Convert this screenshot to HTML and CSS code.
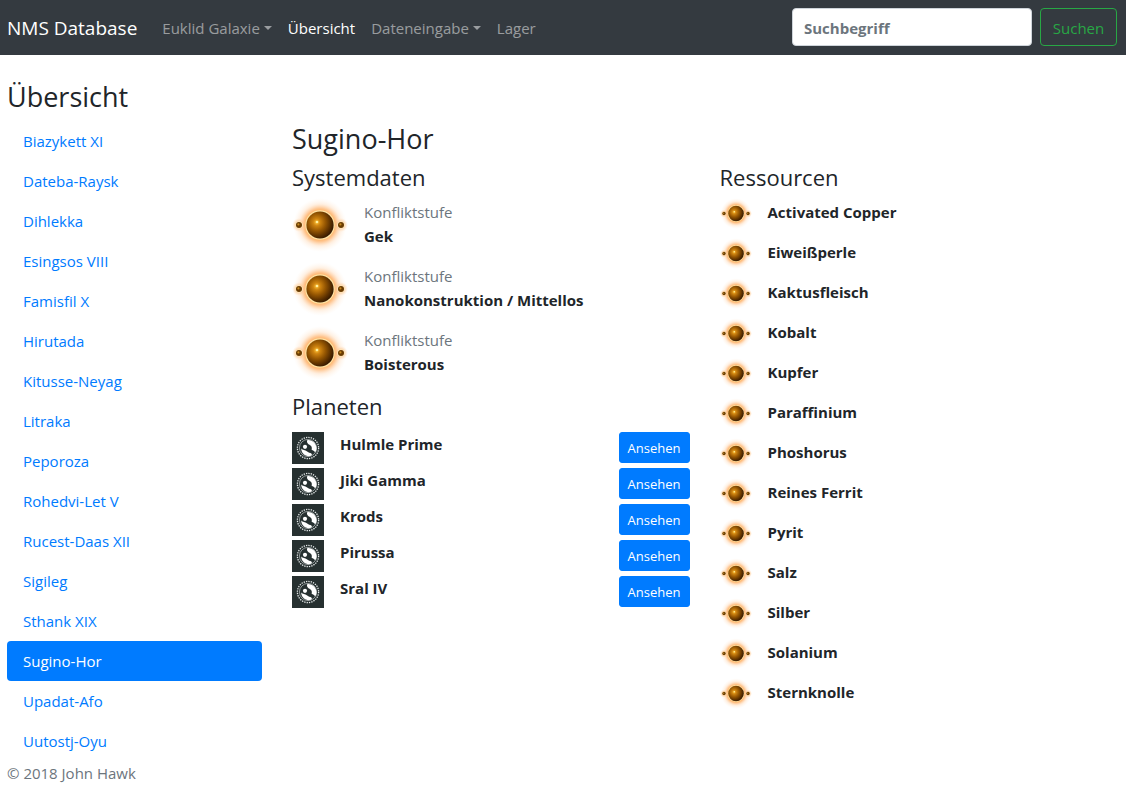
FILE: index.html
```html
<!DOCTYPE html>
<html lang="de">
<head>
<meta charset="utf-8">
<meta name="viewport" content="width=device-width, initial-scale=1">
<title>NMS Database</title>
<link rel="stylesheet" href="styles.css">
</head>
<body>
<svg class="sprite" aria-hidden="true">
  <defs>
    <radialGradient id="glow">
      <stop offset="0.5" stop-color="#ffa64c" stop-opacity="0.95"/>
      <stop offset="0.62" stop-color="#ffb066" stop-opacity="0.7"/>
      <stop offset="0.78" stop-color="#ffcc9c" stop-opacity="0.3"/>
      <stop offset="1" stop-color="#ffe8d0" stop-opacity="0"/>
    </radialGradient>
    <radialGradient id="moonglow">
      <stop offset="0.3" stop-color="#ffb060" stop-opacity="0.8"/>
      <stop offset="1" stop-color="#ffd8b0" stop-opacity="0"/>
    </radialGradient>
    <radialGradient id="ball" cx="0.38" cy="0.4" r="0.64">
      <stop offset="0" stop-color="#ffc63c"/>
      <stop offset="0.2" stop-color="#cf8410"/>
      <stop offset="0.5" stop-color="#955602"/>
      <stop offset="0.8" stop-color="#5a2f00"/>
      <stop offset="1" stop-color="#351900"/>
    </radialGradient>
    <symbol id="orb" viewBox="0 0 56 56">
      <circle cx="28" cy="29" r="27" fill="url(#glow)"/>
      <circle cx="7" cy="29" r="7" fill="url(#moonglow)"/>
      <circle cx="49" cy="29" r="7" fill="url(#moonglow)"/>
      <circle cx="28" cy="29" r="14.8" fill="#ffe3a4"/>
      <circle cx="7" cy="29" r="3.8" fill="#ffe9c0"/>
      <circle cx="49" cy="29" r="3.8" fill="#ffe9c0"/>
      <circle cx="28" cy="29" r="13.6" fill="url(#ball)"/>
      <circle cx="25" cy="26" r="1.3" fill="#fff0a0"/>
      <circle cx="7" cy="29" r="3" fill="#6b3c02"/>
      <circle cx="49" cy="29" r="3" fill="#6b3c02"/>
      <circle cx="6.400" cy="28.400" r="1.1" fill="#c88a20"/>
      <circle cx="48.400" cy="28.400" r="1.1" fill="#c88a20"/>
    </symbol>
    <symbol id="planet" viewBox="0 0 32 32">
      <rect width="32" height="32" fill="#263030"/>
      <circle cx="16" cy="16" r="10.6" fill="none" stroke="#e8ecec" stroke-width="1.3" stroke-dasharray="1.3 1.08"/>
      <circle cx="16" cy="16" r="8.6" fill="none" stroke="#a9b0b0" stroke-width="0.8"/>
      <path fill="#fff" d="M15.500 8C20.500 7.600 24.600 11.500 24.500 16.500C24.400 18.200 24 19.300 23.200 20.300C22.300 19.300 21 18.300 19.600 17.800C19.900 16.800 20 15.500 19.300 14.300C18.500 12.900 16.600 12.700 15.600 11.200C14.900 10.200 14.700 9 15.500 8Z"/>
      <circle cx="13" cy="14.800" r="2.100" fill="#fff"/>
      <path fill="#fff" d="M9.200 16.500C10.600 18.300 13.400 17.800 14.800 19.200C16.200 20.700 18.300 20.500 19.600 21.800C20 22.300 20 23 19.500 23.600C15 25.500 9.300 22.300 9.200 16.500Z"/>
    </symbol>
  </defs>
</svg>

<nav class="navbar">
  <a class="brand" href="#">NMS Database</a>
  <ul class="nav-list">
    <li><a class="nav-link dropdown" href="#">Euklid Galaxie</a></li>
    <li><a class="nav-link active" href="#" aria-current="page">Übersicht</a></li>
    <li><a class="nav-link dropdown" href="#">Dateneingabe</a></li>
    <li><a class="nav-link" href="#">Lager</a></li>
  </ul>
  <form class="search">
    <input class="search-input" type="search" placeholder="Suchbegriff" aria-label="Suchbegriff">
    <button class="btn-search" type="submit">Suchen</button>
  </form>
</nav>

<main class="container">
  <h1 class="title">Übersicht</h1>
  <div class="layout">
    <nav class="pills" aria-label="Systeme">
      <a class="pill" href="#">Biazykett XI</a>
      <a class="pill" href="#">Dateba-Raysk</a>
      <a class="pill" href="#">Dihlekka</a>
      <a class="pill" href="#">Esingsos VIII</a>
      <a class="pill" href="#">Famisfil X</a>
      <a class="pill" href="#">Hirutada</a>
      <a class="pill" href="#">Kitusse-Neyag</a>
      <a class="pill" href="#">Litraka</a>
      <a class="pill" href="#">Peporoza</a>
      <a class="pill" href="#">Rohedvi-Let V</a>
      <a class="pill" href="#">Rucest-Daas XII</a>
      <a class="pill" href="#">Sigileg</a>
      <a class="pill" href="#">Sthank XIX</a>
      <a class="pill selected" href="#" aria-current="true">Sugino-Hor</a>
      <a class="pill" href="#">Upadat-Afo</a>
      <a class="pill" href="#">Uutostj-Oyu</a>
    </nav>
    <section>
      <h2 class="title">Sugino-Hor</h2>
      <div class="columns">
        <div>
          <h3 class="subtitle">Systemdaten</h3>
          <ul class="facts">
            <li class="fact"><svg class="orb-large"><use href="#orb"/></svg><div><div class="muted">Konfliktstufe</div><strong>Gek</strong></div></li>
            <li class="fact"><svg class="orb-large"><use href="#orb"/></svg><div><div class="muted">Konfliktstufe</div><strong>Nanokonstruktion / Mittellos</strong></div></li>
            <li class="fact"><svg class="orb-large"><use href="#orb"/></svg><div><div class="muted">Konfliktstufe</div><strong>Boisterous</strong></div></li>
          </ul>
          <h3 class="subtitle">Planeten</h3>
          <ul class="planets">
            <li class="planet"><svg class="planet-icon"><use href="#planet"/></svg><strong class="planet-name">Hulmle Prime</strong><button class="btn-view" type="button">Ansehen</button></li>
            <li class="planet"><svg class="planet-icon"><use href="#planet"/></svg><strong class="planet-name">Jiki Gamma</strong><button class="btn-view" type="button">Ansehen</button></li>
            <li class="planet"><svg class="planet-icon"><use href="#planet"/></svg><strong class="planet-name">Krods</strong><button class="btn-view" type="button">Ansehen</button></li>
            <li class="planet"><svg class="planet-icon"><use href="#planet"/></svg><strong class="planet-name">Pirussa</strong><button class="btn-view" type="button">Ansehen</button></li>
            <li class="planet"><svg class="planet-icon"><use href="#planet"/></svg><strong class="planet-name">Sral IV</strong><button class="btn-view" type="button">Ansehen</button></li>
          </ul>
        </div>
        <div>
          <h3 class="subtitle">Ressourcen</h3>
          <ul class="resources">
            <li class="resource"><svg class="orb-small"><use href="#orb"/></svg><strong>Activated Copper</strong></li>
            <li class="resource"><svg class="orb-small"><use href="#orb"/></svg><strong>Eiweißperle</strong></li>
            <li class="resource"><svg class="orb-small"><use href="#orb"/></svg><strong>Kaktusfleisch</strong></li>
            <li class="resource"><svg class="orb-small"><use href="#orb"/></svg><strong>Kobalt</strong></li>
            <li class="resource"><svg class="orb-small"><use href="#orb"/></svg><strong>Kupfer</strong></li>
            <li class="resource"><svg class="orb-small"><use href="#orb"/></svg><strong>Paraffinium</strong></li>
            <li class="resource"><svg class="orb-small"><use href="#orb"/></svg><strong>Phoshorus</strong></li>
            <li class="resource"><svg class="orb-small"><use href="#orb"/></svg><strong>Reines Ferrit</strong></li>
            <li class="resource"><svg class="orb-small"><use href="#orb"/></svg><strong>Pyrit</strong></li>
            <li class="resource"><svg class="orb-small"><use href="#orb"/></svg><strong>Salz</strong></li>
            <li class="resource"><svg class="orb-small"><use href="#orb"/></svg><strong>Silber</strong></li>
            <li class="resource"><svg class="orb-small"><use href="#orb"/></svg><strong>Solanium</strong></li>
            <li class="resource"><svg class="orb-small"><use href="#orb"/></svg><strong>Sternknolle</strong></li>
          </ul>
        </div>
      </div>
    </section>
  </div>
  <footer class="muted">© 2018 John Hawk</footer>
</main>
</body>
</html>
```
FILE: styles.css
```css
*, *::before, *::after { box-sizing: border-box; }

body {
  margin: 0;
  font-family: "Segoe UI", "Open Sans", "Noto Sans", sans-serif;
  font-size: 15px;
  line-height: 24px;
  color: #212529;
  background: #fff;
}

a { text-decoration: none; }
ul { list-style: none; margin: 0; padding: 0; }
strong { font-weight: 700; }
input, button { font-family: inherit; font-size: 15px; line-height: 24px; }
.sprite { position: absolute; width: 0; height: 0; }

.navbar {
  display: flex;
  align-items: center;
  padding: 8px 9px 9px 7px;
  background: #343a40;
}
.brand { margin-right: 17px; padding-top: 2px; font-size: 19px; line-height: 30px; color: #fff; }
.nav-list { display: flex; flex: 1; }
.nav-link { display: block; padding: 8px 8px 6px; color: rgba(255, 255, 255, 0.5); }
.nav-link.active { color: #fff; }
.dropdown::after {
  content: "";
  display: inline-block;
  margin-left: 4px;
  vertical-align: 4px;
  border-top: 4px solid;
  border-left: 4px solid transparent;
  border-right: 4px solid transparent;
}
.search { display: flex; gap: 8px; }
.search-input {
  width: 240px;
  height: 38px;
  padding: 7px 11px 5px;
  border: 1px solid #ced4da;
  border-radius: 4px;
  background: #fff;
  font-weight: 700;
  color: #495057;
  appearance: none;
}
.search-input::placeholder { color: #6c757d; opacity: 1; }
.btn-search {
  min-width: 77px;
  padding: 7px 11px 5px;
  border: 1px solid #28a745;
  border-radius: 4px;
  background: transparent;
  color: #28a745;
}

.container { padding: 24px 9px 0 7px; }
.title { margin: 0 0 6px; font-size: 27px; line-height: 36px; font-weight: 400; }
.subtitle { margin: 0 0 8px; font-size: 22px; line-height: 29px; font-weight: 400; }
.layout { display: grid; grid-template-columns: 255fr 825fr; gap: 30px; }
.columns { display: grid; grid-template-columns: 1fr 1fr; gap: 30px; }

.pill { display: block; padding: 8px 16px; border-radius: 4px; color: #007bff; }
.pill.selected { background: #007bff; color: #fff; }

.muted { color: #6c757d; }
.fact { display: flex; align-items: center; gap: 16px; height: 48px; margin-bottom: 16px; }
.orb-large { flex: none; width: 56px; height: 56px; }

.planets { display: grid; gap: 4px; padding-top: 3px; }
.planet { display: flex; align-items: flex-start; }
.planet-icon { flex: none; width: 32px; height: 32px; margin-right: 16px; }
.planet-name { flex: 1; }
.btn-view {
  min-width: 71px;
  padding: 6px 8px 4px;
  border: 1px solid #007bff;
  border-radius: 3px;
  background: #007bff;
  color: #fff;
  font-size: 13px;
  line-height: 19px;
}

.resources { display: grid; gap: 16px; }
.resource { display: flex; align-items: center; gap: 16px; height: 24px; }
.orb-small { flex: none; width: 32px; height: 32px; margin-top: 2px; }
```
